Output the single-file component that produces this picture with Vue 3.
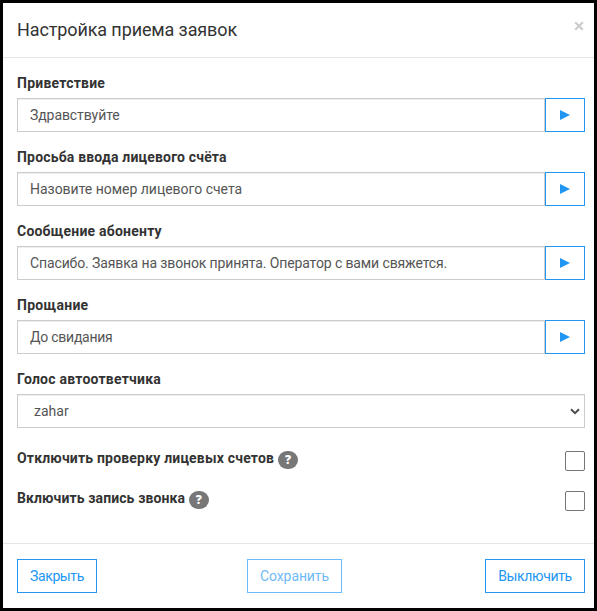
<script setup>
import { reactive, ref } from 'vue'

const fields = reactive([
  { id: 'greeting', label: 'Приветствие', value: 'Здравствуйте' },
  { id: 'account', label: 'Просьба ввода лицевого счёта', value: 'Назовите номер лицевого счета' },
  { id: 'message', label: 'Сообщение абоненту', value: 'Спасибо. Заявка на звонок принята. Оператор с вами свяжется.' },
  { id: 'farewell', label: 'Прощание', value: 'До свидания' },
])
const options = reactive([
  { id: 'check', label: 'Отключить проверку лицевых счетов', on: false },
  { id: 'record', label: 'Включить запись звонка', on: false },
])
const voice = ref('zahar')
</script>

<template>
  <div class="page">
    <div class="modal">
      <header class="head">
        <h4 class="title">Настройка приема заявок</h4>
        <button class="close" aria-label="Закрыть">
          <svg width="10" height="10" viewBox="0 0 10 10"><path d="M1.2 1.2 8.8 8.8M8.8 1.2 1.2 8.8" /></svg>
        </button>
      </header>
      <main class="body">
        <div v-for="f in fields" :key="f.id" class="group">
          <label class="label" :for="f.id"><span :class="'l-' + f.id">{{ f.label }}</span></label>
          <div class="row">
            <input :id="f.id" v-model="f.value" class="control" :class="'v-' + f.id" />
            <button class="btn play" aria-label="Прослушать">
              <svg width="10" height="10" viewBox="0 0 10 10"><path d="M0 0 10 5 0 10z" /></svg>
            </button>
          </div>
        </div>
        <div class="group">
          <label class="label" for="voice"><span class="l-voice">Голос автоответчика</span></label>
          <div class="select-box">
            <select id="voice" v-model="voice" class="control select">
              <option>zahar</option>
            </select>
            <svg class="chevron" width="10" height="7" viewBox="0 0 10 7"><path d="M1 1.2 5 5.2 9 1.2" /></svg>
          </div>
        </div>
        <div v-for="o in options" :key="o.id" class="option">
          <label class="label inline" :for="o.id"><span :class="'l-' + o.id">{{ o.label }}</span></label>
          <span class="badge">?</span>
          <input :id="o.id" v-model="o.on" type="checkbox" class="check" />
        </div>
      </main>
      <footer class="foot">
        <button class="btn b-close"><span>Закрыть</span></button>
        <button class="btn b-save" disabled><span>Сохранить</span></button>
        <button class="btn b-off"><span>Выключить</span></button>
      </footer>
    </div>
  </div>
</template>

<style>
body { background: #000; overflow: hidden; }
</style>

<style scoped>
* { box-sizing: border-box; }
.page {
  width: 597px;
  height: 611px;
  padding: 3px;
  background: #000;
  font-family: Roboto, "Noto Sans", sans-serif;
  font-size: 14px;
  line-height: 20px;
  color: #333;
}
.modal { width: 591px; height: 605px; background: #fff; }
.head {
  display: flex;
  justify-content: space-between;
  height: 55px;
  padding: 15px 10px 0 14px;
  border-bottom: 1px solid #e5e5e5;
}
.title { margin: 0; font-size: 18px; line-height: 24px; font-weight: 400; letter-spacing: -0.11px; white-space: nowrap; }
.close { display: block; width: 10px; height: 10px; margin: 3px 0 0; padding: 0; border: 0; background: none; }
.close svg { display: block; }
.close path { stroke: #ccc; stroke-width: 2.2; fill: none; }
.body { height: 485px; padding: 15px 9px 0 14px; }
.group { height: 74px; }
.label { display: block; height: 25px; font-weight: 700; white-space: nowrap; }
.l-greeting { letter-spacing: 0.23px; }
.l-account { letter-spacing: 0.18px; }
.l-message { letter-spacing: 0.22px; }
.l-farewell { letter-spacing: 0.28px; }
.l-voice { letter-spacing: 0.23px; }
.l-check { letter-spacing: 0.19px; }
.l-record { letter-spacing: 0.11px; }
.row { display: flex; }
.control {
  display: block;
  flex: 1;
  min-width: 0;
  width: 100%;
  height: 34px;
  margin: 0;
  padding: 6px 12px;
  border: 1px solid #ccc;
  border-radius: 0;
  outline: 0;
  background: #fff;
  box-shadow: inset 0 1px 1px rgba(0, 0, 0, 0.075);
  font: inherit;
  color: #555;
}
.v-greeting { letter-spacing: -0.08px; }
.v-account { letter-spacing: -0.02px; }
.v-message { letter-spacing: -0.12px; }
.v-farewell { letter-spacing: -0.25px; }
.select-box { display: grid; align-items: center; }
.select { grid-area: 1 / 1; appearance: none; padding-left: 16px; }
.chevron { grid-area: 1 / 1; justify-self: end; margin-right: 5px; z-index: 1; pointer-events: none; }
.chevron path { fill: none; stroke: #4d4d4d; stroke-width: 2; }
.btn {
  height: 34px;
  margin: 0;
  padding: 0;
  border: 1px solid #2196f3;
  border-radius: 0;
  background: #fff;
  color: #2196f3;
  font: inherit;
  white-space: nowrap;
}
.play { display: flex; align-items: center; justify-content: center; width: 40px; }
.play path { fill: #2196f3; }
.option { display: flex; height: 40px; }
.inline { height: 20px; margin-top: 5px; }
.badge {
  width: 20px;
  height: 18px;
  margin: 8px 0 0 3.8px;
  border-radius: 9px;
  background: #777;
  color: #fff;
  font-family: "Open Sans", sans-serif;
  font-size: 12px;
  line-height: 18px;
  font-weight: 800;
  text-align: center;
}
.check {
  appearance: none;
  width: 20px;
  height: 20px;
  margin: 8px 0 0 auto;
  border: 1px solid #767676;
  border-radius: 2px;
  background: #fff;
}
.foot {
  display: flex;
  justify-content: space-between;
  height: 65px;
  padding: 15px 9px 0 14px;
  border-top: 1px solid #e5e5e5;
}
.b-close { width: 80px; letter-spacing: -0.4px; }
.b-save { width: 95px; margin-left: 7px; letter-spacing: -0.1px; opacity: 0.65; }
.b-off { width: 100px; letter-spacing: -0.35px; }
</style>
